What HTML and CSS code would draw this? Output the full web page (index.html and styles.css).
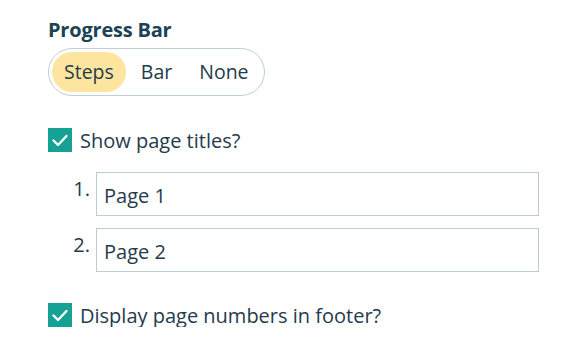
FILE: index.html
```html
<!DOCTYPE html>
<html>
<head>
<meta charset="utf-8">
<link rel="stylesheet" href="styles.css">
</head>
<body>
<div class="panel">
  <h2 class="title">Progress Bar</h2>
  <div class="segmented">
    <span class="seg active">Steps</span>
    <span class="seg">Bar</span>
    <span class="seg">None</span>
  </div>
  <label class="check-row">
    <span class="box"><svg viewBox="0 0 24 24" width="24" height="24"><path d="M5.5 12.5 L10 17 L18.5 8" fill="none" stroke="#fff" stroke-width="2.4" stroke-linecap="round" stroke-linejoin="round"/></svg></span>
    <span class="check-label">Show page titles?</span>
  </label>
  <ol class="pages">
    <li class="page-item"><span class="num">1.</span><input class="page-input" type="text" value="Page 1"></li>
    <li class="page-item"><span class="num">2.</span><input class="page-input" type="text" value="Page 2"></li>
  </ol>
  <label class="check-row last">
    <span class="box"><svg viewBox="0 0 24 24" width="24" height="24"><path d="M5.5 12.5 L10 17 L18.5 8" fill="none" stroke="#fff" stroke-width="2.4" stroke-linecap="round" stroke-linejoin="round"/></svg></span>
    <span class="check-label">Display page numbers in footer?</span>
  </label>
</div>
</body>
</html>
```

FILE: styles.css
```css
html, body {
  margin: 0;
  padding: 0;
  background: #ffffff;
}
body {
  font-family: "Open Sans", "Noto Sans", sans-serif;
  color: #243b4a;
}
.panel {
  padding: 16px 0 0 48px;
}
.title {
  margin: 0;
  font-size: 20px;
  line-height: 27px;
  font-weight: 700;
  color: #1c4255;
  letter-spacing: -0.2px;
}
.segmented {
  margin-top: 5px;
  display: inline-flex;
  gap: 3px;
  padding: 3px;
  border: 1px solid #bfcfcf;
  border-radius: 24px;
}
.seg {
  height: 40px;
  line-height: 40px;
  padding: 0 12px;
  border-radius: 20px;
  font-size: 19.5px;
  color: #243b4a;
}
.seg.active {
  background: #fee59f;
}
.check-row {
  display: flex;
  align-items: center;
  gap: 8px;
  margin-top: 32px;
  height: 24px;
}
.check-row.last {
  margin-top: 31px;
}
.box {
  width: 24px;
  height: 24px;
  background: #15a194;
  display: block;
  flex: none;
}
.box svg {
  display: block;
}
.check-label {
  font-size: 20px;
  color: #243b4a;
}
.pages {
  list-style: none;
  margin: 20px 0 0 0;
  padding: 0;
  display: flex;
  flex-direction: column;
  gap: 12px;
}
.page-item {
  display: flex;
  align-items: flex-start;
}
.num {
  width: 48px;
  padding-right: 6px;
  box-sizing: border-box;
  text-align: right;
  font-size: 20px;
  line-height: 26px;
  padding-top: 4px;
  color: #243b4a;
}
.page-input {
  width: 443px;
  height: 44px;
  box-sizing: border-box;
  border: 1px solid #bccccc;
  border-radius: 0;
  padding: 2px 7px 0;
  font-family: "Open Sans", "Noto Sans", sans-serif;
  font-size: 20px;
  color: #243b4a;
  outline: none;
  margin: 0;
}
```
